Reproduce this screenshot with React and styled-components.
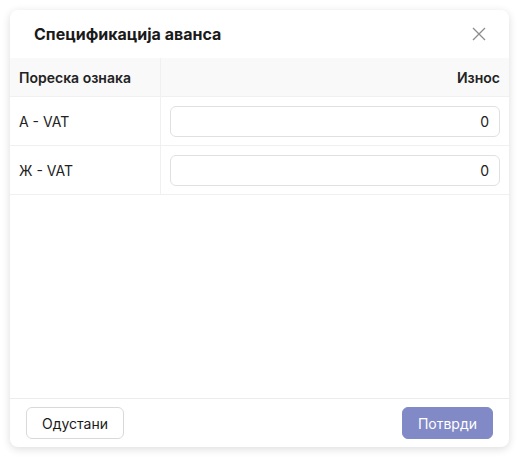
import React from "react";
import styled, { createGlobalStyle } from "styled-components";

const Global = createGlobalStyle`
  html, body { margin: 0; padding: 0; background: #fff; }
  body { font-family: "Inter", "Noto Sans", sans-serif; color: #1d1d1f; }
  * { box-sizing: border-box; }
`;

const Page = styled.div`
  padding: 10px;
  height: 457px;
`;

const Modal = styled.div`
  height: 100%;
  display: flex;
  flex-direction: column;
  background: #fff;
  border-radius: 8px;
  box-shadow: 0 2px 8px rgba(0, 0, 0, 0.14);
  overflow: hidden;
`;

const Header = styled.div`
  height: 48px;
  display: flex;
  align-items: center;
  justify-content: space-between;
  padding: 0 22px 0 24px;
`;

const Title = styled.h2`
  margin: 0;
  font-size: 16px;
  font-weight: 700;
  color: #1a1a1a;
`;

const Close = styled.button`
  border: 0;
  background: none;
  padding: 0;
  width: 16px;
  height: 16px;
  display: flex;
  cursor: pointer;
`;

const Table = styled.div`
  display: grid;
  grid-template-columns: 150px 1fr;
`;

const Cell = styled.div`
  display: flex;
  align-items: center;
  justify-content: ${(p) => (p.$right ? "flex-end" : "flex-start")};
  height: ${(p) => p.$h || 49}px;
  padding: 0 9px;
  font-size: 14px;
  font-weight: ${(p) => (p.$head ? 600 : 400)};
  background: ${(p) => (p.$head ? "#f9f9f9" : "#fff")};
  border-bottom: 1px solid #f0f0f0;
  border-left: ${(p) => (p.$right ? "1px solid #f0f0f0" : "0")};
  color: #222;
`;

const Input = styled.input`
  width: 100%;
  height: 31px;
  border: 1px solid #e0e0e0;
  border-radius: 6px;
  padding: 0 10px;
  text-align: right;
  font: inherit;
  font-size: 14px;
  color: #222;
  outline: none;
`;

const Body = styled.div`
  flex: 1;
`;

const Footer = styled.div`
  display: flex;
  justify-content: space-between;
  padding: 8px 16px;
  border-top: 1px solid #ececec;
`;

const Button = styled.button`
  height: 32px;
  padding: 0 15px;
  border-radius: 6px;
  font-family: inherit;
  font-size: 14px;
  cursor: pointer;
  border: 1px solid ${(p) => (p.$primary ? "#8189c6" : "#d9d9d9")};
  background: ${(p) => (p.$primary ? "#8189c6" : "#fff")};
  color: ${(p) => (p.$primary ? "#fff" : "#1a1a1a")};
`;

const rows = ["А - VAT", "Ж - VAT"];

export default function App() {
  return (
    <Page>
      <Global />
      <Modal>
        <Header>
          <Title>Спецификација аванса</Title>
          <Close aria-label="close">
            <svg width="16" height="16" viewBox="0 0 16 16">
              <path d="M2 2L14 14M14 2L2 14" stroke="#8c8c8c" strokeWidth="1.3" />
            </svg>
          </Close>
        </Header>
        <Table>
          <Cell $head $h={39}>Пореска ознака</Cell>
          <Cell $head $right $h={39}>Износ</Cell>
          {rows.map((r) => (
            <React.Fragment key={r}>
              <Cell>{r}</Cell>
              <Cell $right>
                <Input defaultValue="0" />
              </Cell>
            </React.Fragment>
          ))}
        </Table>
        <Body />
        <Footer>
          <Button>Одустани</Button>
          <Button $primary>Потврди</Button>
        </Footer>
      </Modal>
    </Page>
  );
}
